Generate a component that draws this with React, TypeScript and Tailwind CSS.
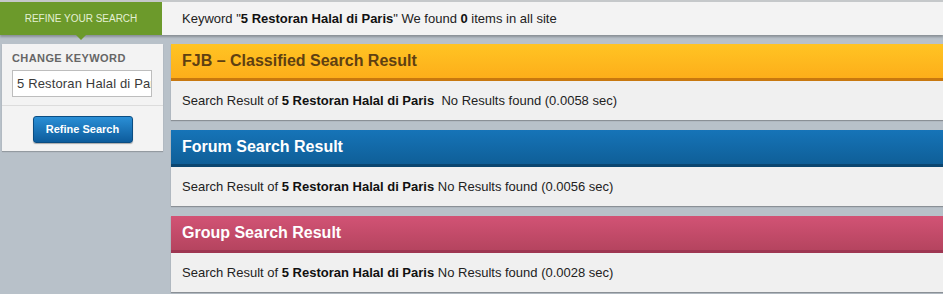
import React from "react";

const keyword = "5 Restoran Halal di Paris";

interface ResultProps {
  title: string;
  time: string;
  headClass: string;
  titleClass: string;
  gap?: boolean;
}

function ResultPanel({ title, time, headClass, titleClass, gap }: ResultProps) {
  return (
    <div className="shadow-[0_1px_1px_rgba(0,0,0,0.25)]">
      <div className={`h-[37px] flex items-center px-[11px] ${headClass}`}>
        <span className={`text-[16px] font-bold ${titleClass}`}>{title}</span>
      </div>
      <div className="h-[39px] flex items-center px-[11px] bg-[#f0f0f0] text-[13px] text-[#222]">
        Search Result of&nbsp;<b className="text-[#111]">{keyword}</b>
        {gap ? "\u00a0\u00a0" : "\u00a0"}No Results found ({time} sec)
      </div>
    </div>
  );
}

export default function App() {
  return (
    <div
      className="w-[943px] h-[294px] overflow-hidden bg-[#b8c1c9]"
      style={{ fontFamily: '"Liberation Sans", Arial, sans-serif' }}
    >
      {/* top bar */}
      <div className="h-[35px] bg-[#f3f3f3] border-t-2 border-[#c5c8ca] shadow-[0_2px_2px_rgba(0,0,0,0.25)] flex">
        <div className="relative w-[162px] bg-[#6c9a2b] flex items-center justify-center">
          <span className="text-[10px] text-[#e4f0d4] uppercase">Refine your search</span>
          <span className="absolute left-[76px] -bottom-[5px] w-0 h-0 border-l-[5px] border-r-[5px] border-t-[5px] border-l-transparent border-r-transparent border-t-[#6c9a2b]" />
        </div>
        <div className="flex items-center pl-[20px] text-[13px] text-[#222]">
          Keyword "<b className="text-[#111]">{keyword}</b>" We found&nbsp;<b className="text-[#111]">0</b>&nbsp;items in all site
        </div>
      </div>

      <div className="flex gap-[8px] pt-[9px] pl-[2px]">
        {/* sidebar */}
        <div className="w-[161px] h-[107px] bg-[#f3f3f3] shadow-[0_1px_1px_rgba(0,0,0,0.2)] self-start">
          <div className="px-[10px] pt-[7px] pb-[8px] border-b border-[#dcdcdc]">
            <div className="text-[11px] leading-[14px] font-bold tracking-[0.4px] text-[#666] mb-[5px]">CHANGE KEYWORD</div>
            <input
              readOnly
              value={keyword}
              className="block w-[140px] h-[27px] bg-white border border-[#bdbdbd] pl-[4px] pr-0 text-[13px] tracking-[0.15px] text-[#3a3a3a] outline-none"
            />
          </div>
          <div className="flex justify-center pt-[10px]">
            <button className="w-[100px] h-[27px] rounded-[3px] bg-gradient-to-b from-[#2a8fd6] to-[#0d5c9c] border border-[#0b4d82] text-white text-[11px] font-bold shadow-[0_1px_1px_rgba(0,0,0,0.3)]">
              Refine Search
            </button>
          </div>
        </div>

        {/* results */}
        <div className="flex-1 flex flex-col gap-[10px]">
          <ResultPanel
            title="FJB – Classified Search Result"
            time="0.0058"
            gap
            headClass="bg-gradient-to-b from-[#ffc423] to-[#fdae1a] border-b-[3px] border-[#c8780f]"
            titleClass="text-[#5e4012]"
          />
          <ResultPanel
            title="Forum Search Result"
            time="0.0056"
            headClass="bg-gradient-to-b from-[#1674b8] to-[#0f5f98] border-b-[3px] border-[#0b4670]"
            titleClass="text-white"
          />
          <ResultPanel
            title="Group Search Result"
            time="0.0028"
            headClass="bg-gradient-to-b from-[#d25375] to-[#b5445f] border-b-[3px] border-[#9e3652]"
            titleClass="text-white"
          />
        </div>
      </div>
    </div>
  );
}
